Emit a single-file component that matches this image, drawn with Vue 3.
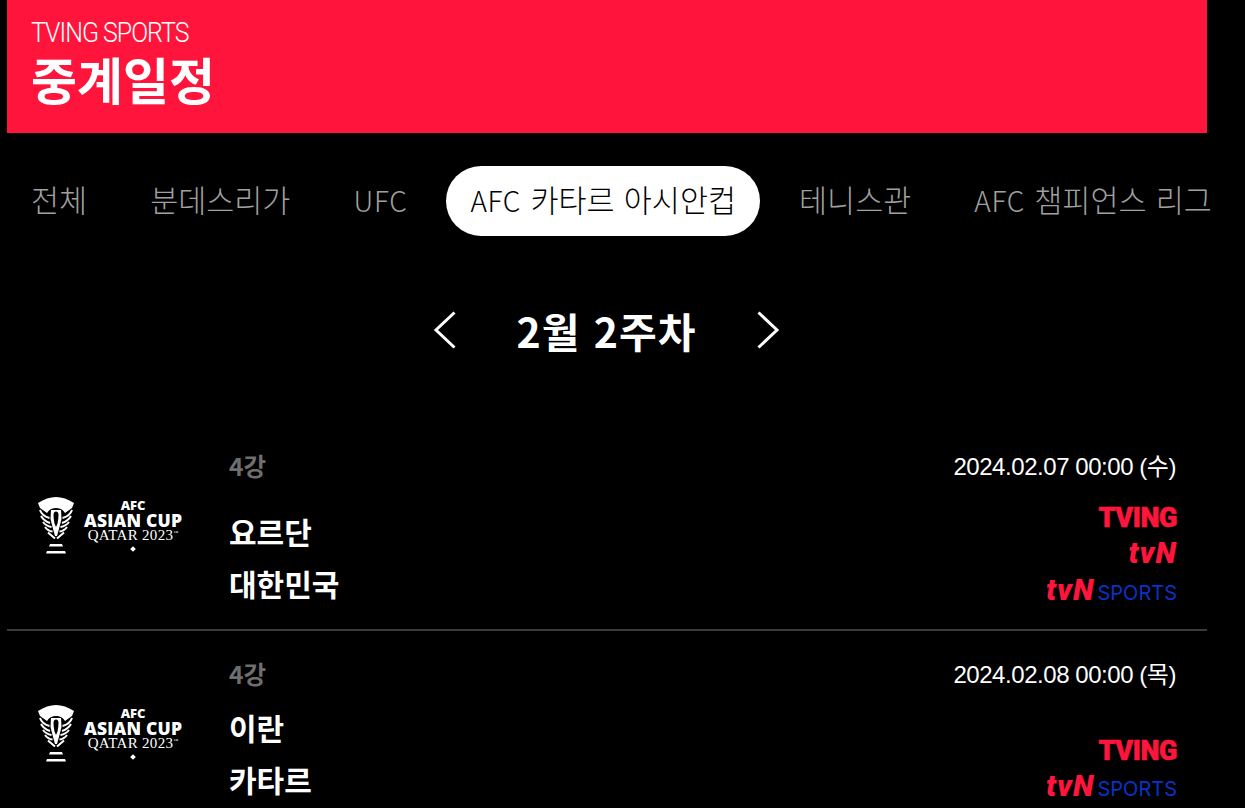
<script setup>
const tabs = [
  { name: '전체' },
  { name: '분데스리가' },
  { latin: 'UFC' },
  { latin: 'AFC', name: ' 카타르 아시안컵', active: true },
  { name: '테니스관' },
  { latin: 'AFC', name: ' 챔피언스 리그' }
]

const matches = [
  { round: '4강', date: '2024.02.07 00:00 (수)', teams: ['요르단', '대한민국'], tving: true, tvn: true, sports: true, short: false },
  { round: '4강', date: '2024.02.08 00:00 (목)', teams: ['이란', '카타르'], tving: true, tvn: false, sports: true, short: true }
]
</script>

<template>
  <div class="page">
    <header class="banner">
      <p class="banner-sub">TVING SPORTS</p>
      <h1 class="banner-title">중계일정</h1>
    </header>

    <nav class="tabs">
      <a v-for="(tab, i) in tabs" :key="i" class="tab" :class="{ active: tab.active }"><span v-if="tab.latin" class="tab-latin">{{ tab.latin }}</span>{{ tab.name }}</a>
    </nav>

    <div class="week">
      <svg class="arrow" width="24" height="38" viewBox="0 0 24 38"><path d="M21.5 1.5 3 19l18.5 17.5" /></svg>
      <h2 class="week-label">2월 2주차</h2>
      <svg class="arrow" width="24" height="38" viewBox="0 0 24 38"><path d="M2.5 1.5 21 19 2.5 36.5" /></svg>
    </div>

    <section class="list">
      <article v-for="m in matches" :key="m.date" class="match" :class="{ short: m.short }">
        <div class="league">
          <svg class="trophy" width="38" height="60" viewBox="0 0 38 60">
            <path fill="#fff" d="M1 8Q19-4 37 8l-2 5-7 5q-3-5-9-5t-9 5l-7-5Z" />
            <path fill="#fff" d="M14 15h10l.5 9-2 8-2.500 9h-2l-2.500-9-2-8Z" />
            <path fill="#000" d="M19 16.500q2.500 0 2.500 3.500t-1 8.500L19 32l-1.500-3.500q-1-5-1-8.500t2.500-3.500Z" />
            <path fill="none" stroke="#fff" stroke-width="2" d="M3 15q2 6 9.500 8M4 21q3 5 9 7M6 27q3 4 8.500 5M8 32q3 4 7.500 4.500M11 37.500l7 6" />
            <path fill="none" stroke="#fff" stroke-width="2" d="M35 15q-2 6-9.500 8M34 21q-3 5-9 7M32 27q-3 4-8.500 5M30 32q-3 4-7.500 4.500M27 37.500l-7 6" />
            <path fill="#fff" d="M13 49h12l1 2.500H12ZM10 56h18l1 2.500H9Z" />
          </svg>
          <div class="league-text">
            <span class="l-afc">AFC</span>
            <span class="l-cup">ASIAN CUP</span>
            <span class="l-qatar">QATAR 2023<sup>™</sup></span>
            <span class="l-dot"></span>
          </div>
        </div>

        <div class="info">
          <span class="round">{{ m.round }}</span>
          <div class="teams">
            <span v-for="t in m.teams" :key="t" class="team">{{ t }}</span>
          </div>
        </div>

        <div class="side">
          <span class="date">{{ m.date }}</span>
          <div class="channels">
            <span v-if="m.tving" class="ch-tving">TVING</span>
            <span v-if="m.tvn" class="ch-tvn">tvN</span>
            <span v-if="m.sports" class="ch-sports"><b>tvN</b>SPORTS</span>
          </div>
        </div>
      </article>
    </section>
  </div>
</template>

<style scoped>
.page {
  width: 1200px;
  height: 808px;
  margin-left: 7px;
  color: #fff;
  font-family: "Liberation Sans", "Noto Sans CJK KR", sans-serif;
}
.banner {
  height: 133px;
  box-sizing: border-box;
  padding: 15px 24px 0;
  background: #ff153c;
}
.banner-sub {
  width: max-content;
  margin: 0;
  font-family: Roboto, sans-serif;
  font-weight: 300;
  font-size: 28px;
  line-height: 36px;
  letter-spacing: -1.1px;
  transform: scaleX(.89);
  transform-origin: left;
}
.banner-title {
  margin: -2px 0 0;
  font-family: "Noto Sans CJK KR", sans-serif;
  font-weight: 700;
  font-size: 50px;
  line-height: 58px;
}
.tabs {
  display: flex;
  gap: 15px;
  margin-top: 33px;
  width: 1238px;
}
.tab {
  flex: none;
  height: 70px;
  padding: 0 24px;
  border-radius: 35px;
  font-family: "Noto Sans CJK KR", sans-serif;
  font-weight: 300;
  font-size: 30.500px;
  line-height: 67px;
  word-spacing: 2.500px;
  color: #a0a0a0;
  white-space: nowrap;
}
.tab-latin {
  font-size: 28px;
  letter-spacing: .7px;
}
.tab.active {
  background: #fff;
  color: #000;
}
.week {
  display: flex;
  justify-content: center;
  align-items: center;
  gap: 60px;
  height: 38px;
  margin-top: 75px;
  margin-left: -1px;
}
.arrow {
  fill: none;
  stroke: #fff;
  stroke-width: 3;
}
.week-label {
  margin: 0;
  font-family: "Noto Sans CJK KR", sans-serif;
  font-weight: 700;
  font-size: 41px;
  line-height: 38px;
  letter-spacing: 1px;
  word-spacing: 3px;
}
.list {
  margin-top: 74px;
}
.match {
  display: grid;
  grid-template-columns: 222px 1fr auto;
  height: 208px;
  box-sizing: border-box;
  padding: 28px 31px 25px 0;
  border-bottom: 2px solid #3a3a3a;
}
.match.short {
  height: 196px;
}
.league {
  display: flex;
  gap: 9px;
  margin: 44px 0 0 30px;
  height: 60px;
}
.trophy {
  flex: none;
}
.league-text {
  display: flex;
  flex-direction: column;
  align-items: center;
  padding-top: 4px;
  white-space: nowrap;
}
.l-afc {
  font-family: "Open Sans", sans-serif;
  font-weight: 800;
  font-size: 13px;
  line-height: 13px;
}
.l-cup {
  font-family: "Open Sans", sans-serif;
  font-weight: 800;
  font-size: 17.500px;
  line-height: 16px;
  letter-spacing: .2px;
}
.l-qatar {
  font-family: "Liberation Serif", serif;
  font-size: 15px;
  line-height: 14px;
  letter-spacing: .3px;
}
.l-qatar sup {
  font-size: 5px;
  line-height: 0;
}
.l-dot {
  width: 4px;
  height: 4px;
  margin-top: 5px;
  background: #fff;
  transform: rotate(45deg);
}
.info {
  display: flex;
  flex-direction: column;
  justify-content: space-between;
}
.round {
  margin-top: -1px;
  font-family: "Noto Sans CJK KR", sans-serif;
  font-weight: 700;
  font-size: 24.500px;
  line-height: 32px;
  color: #6e6e6e;
}
.teams {
  display: flex;
  flex-direction: column;
  gap: 11px;
}
.team {
  font-family: "Noto Sans CJK KR", sans-serif;
  font-weight: 700;
  font-size: 30px;
  line-height: 41px;
}
.side {
  display: flex;
  flex-direction: column;
  justify-content: space-between;
  align-items: flex-end;
}
.date {
  font-size: 24px;
  line-height: 32px;
  letter-spacing: -.45px;
}
.channels {
  display: flex;
  flex-direction: column;
  align-items: flex-end;
  gap: 13px;
  margin: 0 -1px 2px 0;
  color: #ff153c;
}
.ch-tving,
.ch-tvn,
.ch-sports {
  font-family: Roboto, sans-serif;
  font-weight: 900;
  line-height: 24px;
  height: 24px;
}
.ch-tving {
  margin-bottom: -2px;
  font-size: 27px;
  letter-spacing: -.4px;
  -webkit-text-stroke: .6px #ff153c;
}
.ch-tvn {
  font-size: 30px;
  font-style: italic;
  letter-spacing: 1px;
}
.ch-sports {
  font-family: Inter, Roboto, sans-serif;
  font-size: 20px;
  font-weight: 400;
  color: #0a32c8;
}
.ch-sports b {
  margin-right: 3px;
  font-family: Roboto, sans-serif;
  font-size: 30px;
  font-weight: 900;
  font-style: italic;
  letter-spacing: 1px;
  color: #ff153c;
}
</style>

<style>
html, body {
  margin: 0;
  overflow: hidden;
  background: #000;
}
</style>
